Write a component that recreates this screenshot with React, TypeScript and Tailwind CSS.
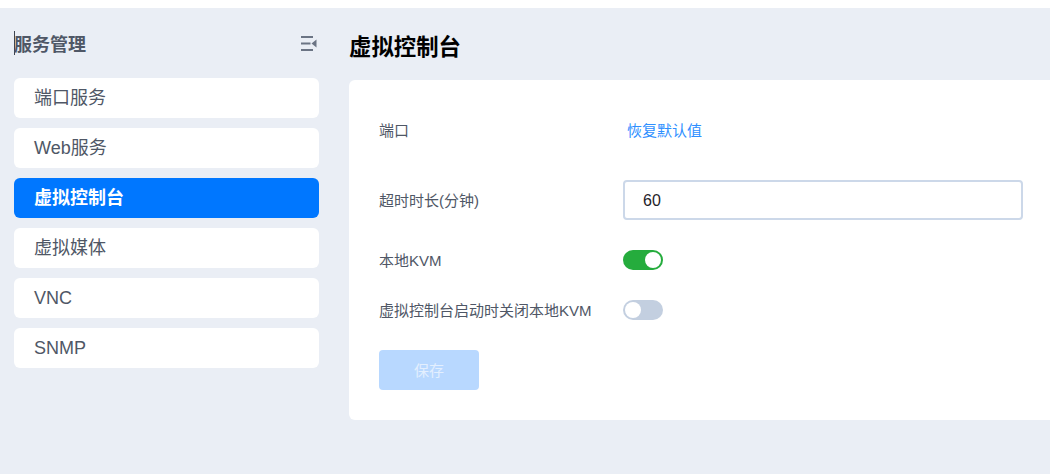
import React from 'react';

const menuItems = ['端口服务', 'Web服务', '虚拟控制台', '虚拟媒体', 'VNC', 'SNMP'];
const activeItem = '虚拟控制台';

function Toggle({ on }: { on: boolean }) {
  return (
    <div
      className={`flex h-5 w-10 items-center rounded-full px-0.5 ${
        on ? 'justify-end bg-[#25ac3d]' : 'justify-start bg-[#c3cfe0]'
      }`}
    >
      <div className="h-4 w-4 rounded-full bg-white" />
    </div>
  );
}

export default function App() {
  return (
    <div className="h-[474px] w-[1050px] overflow-hidden bg-white font-['Liberation_Sans','Noto_Sans_CJK_SC',sans-serif]">
      <div className="h-2 bg-white" />
      <div className="flex h-[466px] bg-[#eaeef5] pl-3.5">
        {/* sidebar */}
        <aside className="w-[305px] shrink-0">
          <div className="flex h-[70px] items-center justify-between pr-0.5">
            <div className="flex items-center">
              <span className="h-6 w-px -mr-px bg-[#3d4450]" />
              <span className="pt-1 text-lg leading-none font-bold text-[#4f5766]">服务管理</span>
            </div>
            <svg width="16" height="15" viewBox="0 0 16 15" fill="none" className="text-[#6b7484]">
              <path d="M0 1H12M0 7.5H9.5M0 14H12" stroke="currentColor" strokeWidth="2" />
              <path d="M15.5 3.5V11.5L10.5 7.5Z" fill="currentColor" />
            </svg>
          </div>
          <nav className="flex flex-col gap-2.5">
            {menuItems.map((item) => (
              <div
                key={item}
                className={`flex h-10 items-center rounded-md pl-5 ${
                  item === activeItem ? 'bg-[#0077ff] font-bold text-white' : 'bg-white text-[#4f5766]'
                }`}
              >
                <span className="text-lg leading-none">{item}</span>
              </div>
            ))}
          </nav>
        </aside>

        {/* main */}
        <main className="ml-[30px] flex-1">
          <h1 className="flex h-[72px] items-center pt-[9px] text-[22.4px] leading-none font-bold text-black">虚拟控制台</h1>
          <section className="h-[340px] rounded-l-md bg-white pt-[30px] pl-[30px] text-[15px] text-[#4f5766]">
            <div className="flex h-10 items-center">
              <label className="w-[248px] pt-0.5">端口</label>
              <span className="pt-0.5 text-[#2e8fff]">恢复默认值</span>
            </div>
            <div className="mt-[30px] flex h-10 items-center">
              <label className="w-[244px] pt-0.5">超时时长(分钟)</label>
              <input
                readOnly
                value="60"
                className="h-10 w-[400px] rounded-sm border-2 border-[#ccd8e9] bg-white px-[18px] pt-0.5 text-base text-[#1f2329] outline-none"
              />
            </div>
            <div className="mt-5 flex h-10 items-center">
              <label className="w-[244px] pt-0.5">本地KVM</label>
              <Toggle on />
            </div>
            <div className="mt-2.5 flex h-10 items-center">
              <label className="w-[244px] pt-0.5">虚拟控制台启动时关闭本地KVM</label>
              <Toggle on={false} />
            </div>
            <button className="mt-5 flex h-10 w-[100px] items-center justify-center rounded-sm bg-[#b8d8ff] pt-0.5 text-[15px] text-[#e3effe]">
              保存
            </button>
          </section>
        </main>
      </div>
    </div>
  );
}
